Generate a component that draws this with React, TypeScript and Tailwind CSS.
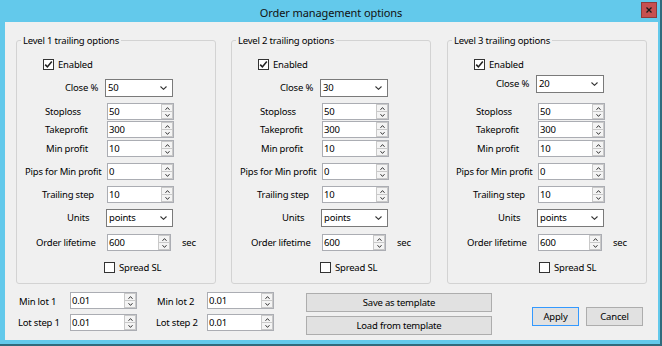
import React from "react";

function Chevron({ up }: { up?: boolean }) {
  return (
    <svg width="5" height="3" viewBox="0 0 5 3" className="block">
      <path
        d={up ? "M0.5 2.8 L2.5 0.6 L4.5 2.8" : "M0.5 0.2 L2.5 2.4 L4.5 0.2"}
        fill="none"
        stroke="#333"
        strokeWidth="1"
      />
    </svg>
  );
}

function Spinner({ value, wide }: { value: string; wide?: "short" | "normal" }) {
  return (
    <div
      className={`flex h-[17px] shrink-0 border border-[#abadb3] bg-white ${
        wide === "short" ? "w-[64px]" : "w-[67px]"
      }`}
    >
      <div className="flex flex-1 items-center pl-[1px] text-[9.5px] leading-none text-black">{value}</div>
      <div className="flex w-[12px] flex-col">
        <div className="flex flex-1 items-center justify-center border border-[#c9c9c9] bg-[#f4f4f4]">
          <Chevron up />
        </div>
        <div className="-mt-px flex flex-1 items-center justify-center border border-[#c9c9c9] bg-[#f4f4f4]">
          <Chevron />
        </div>
      </div>
    </div>
  );
}

function Combo({ value, w }: { value: string; w: "68" | "67" }) {
  return (
    <div
      className={`flex h-[18px] shrink-0 items-center border border-[#7a7a7a] bg-white ${
        w === "68" ? "w-[68px]" : "w-[67px]"
      }`}
    >
      <div className="flex-1 pl-[2px] text-[9.5px] leading-none text-black">{value}</div>
      <svg width="7" height="4" viewBox="0 0 7 4" className="mr-[5px] block">
        <path d="M0.5 0.5 L3.5 3.3 L6.5 0.5" fill="none" stroke="#333" strokeWidth="1.1" />
      </svg>
    </div>
  );
}

function Check({ checked }: { checked?: boolean }) {
  return (
    <div className="flex h-[11px] w-[11px] shrink-0 items-center justify-center border border-[#333] bg-white">
      {checked && (
        <svg width="9" height="9" viewBox="0 0 9 9" className="block">
          <path d="M1.2 4.6 L3.4 6.9 L7.8 1.6" fill="none" stroke="#222" strokeWidth="1.6" />
        </svg>
      )}
    </div>
  );
}

type GroupProps = {
  title: string;
  close: string;
  third?: boolean;
  spread: "g1" | "g2" | "g3";
  ml: "first" | "second" | "third";
};

function Group({ title, close, third, spread, ml }: GroupProps) {
  const mlCls = ml === "first" ? "ml-[11px]" : ml === "second" ? "ml-[15px]" : "ml-[16px]";
  const spreadCls = spread === "g1" ? "ml-[87px]" : spread === "g2" ? "ml-[88px]" : "ml-[91px]";
  return (
    <fieldset
      className={`${mlCls} h-[250px] w-[200px] shrink-0 rounded-[3px] border border-[#d3d3d3] p-0`}
    >
      <legend className="ml-[4px] px-[2px] text-[9.5px] leading-[13px] text-black">{title}</legend>
      <div className="flex flex-col">
        <div className="mt-[12px] flex h-[11px] items-center">
          <div className="ml-[26px]">
            <Check checked />
          </div>
          <span className="ml-[4px] text-[9.5px] leading-none">Enabled</span>
        </div>
        <div className={`${third ? "mt-[5px]" : "mt-[9px]"} flex h-[18px] items-center`}>
          <div className="w-[88px] shrink-0 whitespace-nowrap pl-[48px] text-[9.5px] leading-none">Close %</div>
          <Combo value={close} w="68" />
        </div>
        <div className={`${third ? "mt-[10px]" : "mt-[6px]"} flex h-[17px] items-center`}>
          <div className="w-[90px] shrink-0 whitespace-nowrap pl-[28px] text-[9.5px] leading-none">Stoploss</div>
          <Spinner value="50" />
        </div>
        <div className="mt-[1px] flex h-[17px] items-center">
          <div className="w-[90px] shrink-0 whitespace-nowrap pl-[28px] text-[9.5px] leading-none">Takeprofit</div>
          <Spinner value="300" />
        </div>
        <div className="mt-[2px] flex h-[17px] items-center">
          <div className="w-[90px] shrink-0 whitespace-nowrap pl-[29px] text-[9.5px] leading-none">Min profit</div>
          <Spinner value="10" />
        </div>
        <div className="mt-[6px] flex h-[17px] items-center">
          <div className="w-[90px] shrink-0 whitespace-nowrap pl-[8px] text-[9.5px] leading-none">Pips for Min profit</div>
          <Spinner value="0" />
        </div>
        <div className="mt-[6px] flex h-[17px] items-center">
          <div className="w-[90px] shrink-0 whitespace-nowrap pl-[25px] text-[9.5px] leading-none">Trailing step</div>
          <Spinner value="10" />
        </div>
        <div className="mt-[6px] flex h-[18px] items-center">
          <div className="w-[89px] shrink-0 whitespace-nowrap pl-[50px] text-[9.5px] leading-none">Units</div>
          <Combo value="points" w="67" />
        </div>
        <div className="mt-[7px] flex h-[17px] items-center">
          <div className="w-[90px] shrink-0 whitespace-nowrap pl-[19px] text-[9.5px] leading-none">Order lifetime</div>
          <Spinner value="600" wide="short" />
          <span className="ml-[11px] text-[9.5px] leading-none">sec</span>
        </div>
        <div className="mt-[11px] flex h-[11px] items-center">
          <div className={spreadCls}>
            <Check />
          </div>
          <span className="ml-[4px] text-[9.5px] leading-none">Spread SL</span>
        </div>
      </div>
    </fieldset>
  );
}

export default function App() {
  return (
    <div className="h-[346px] w-[662px] overflow-hidden border-b-2 border-r-2 border-[#2f6b7d] bg-[#63c9eb] font-['Noto_Sans',sans-serif] tracking-[-0.2px] text-black">
      <div className="flex h-[22px] items-center">
        <span className="mt-[3px] flex-1 pl-[21px] text-center text-[11px] leading-none tracking-[-0.1px] text-[#111]">
          Order management options
        </span>
        <div className="mr-[3px] mt-[-2px] flex h-[16px] w-[16px] items-center justify-center border border-[#8e3b3b] bg-[#c75050]">
          <svg width="6" height="6" viewBox="0 0 6 6" className="block">
            <path d="M0.5 0.5 L5.5 5.5 M5.5 0.5 L0.5 5.5" stroke="#1a1a1a" strokeWidth="1.3" />
          </svg>
        </div>
      </div>
      <div className="ml-[5px] h-[318px] w-[653px] bg-[#f0f0f0] pt-[12px]">
        <div className="flex">
          <Group title="Level 1 trailing options" close="50" spread="g1" ml="first" />
          <Group title="Level 2 trailing options" close="30" spread="g2" ml="second" />
          <Group title="Level 3 trailing options" close="20" third spread="g3" ml="third" />
        </div>
        <div className="mt-[8px] flex items-start">
          <div className="ml-[13px] flex flex-col">
            <div className="flex h-[17px] items-center">
              <div className="w-[52px] shrink-0 whitespace-nowrap pl-[1px] pt-[3px] text-[9.5px] leading-none">Min lot 1</div>
              <Spinner value="0.01" />
            </div>
            <div className="mt-[5px] flex h-[17px] items-center">
              <div className="w-[52px] shrink-0 whitespace-nowrap text-[9.5px] leading-none">Lot step 1</div>
              <Spinner value="0.01" />
            </div>
          </div>
          <div className="ml-[19px] flex flex-col">
            <div className="flex h-[17px] items-center">
              <div className="w-[51px] shrink-0 whitespace-nowrap pl-[1px] pt-[3px] text-[9.5px] leading-none">Min lot 2</div>
              <Spinner value="0.01" />
            </div>
            <div className="mt-[5px] flex h-[17px] items-center">
              <div className="w-[51px] shrink-0 whitespace-nowrap text-[9.5px] leading-none">Lot step 2</div>
              <Spinner value="0.01" />
            </div>
          </div>
          <div className="ml-[32px] mt-[1px] flex flex-col gap-[4px]">
            <div className="flex h-[19px] w-[186px] items-center justify-center border border-[#adadad] bg-[#e1e1e1] text-[9.5px] leading-none">
              Save as template
            </div>
            <div className="flex h-[19px] w-[186px] items-center justify-center border border-[#adadad] bg-[#e1e1e1] text-[9.5px] leading-none">
              Load from template
            </div>
          </div>
          <div className="ml-[40px] mt-[15px] flex h-[19px] w-[47px] items-center justify-center border border-[#3399ff] bg-[#e1e1e1] text-[9.5px] leading-none">
            Apply
          </div>
          <div className="ml-[7px] mt-[15px] flex h-[19px] w-[57px] items-center justify-center border border-[#adadad] bg-[#e1e1e1] text-[9.5px] leading-none">
            Cancel
          </div>
        </div>
      </div>
    </div>
  );
}
